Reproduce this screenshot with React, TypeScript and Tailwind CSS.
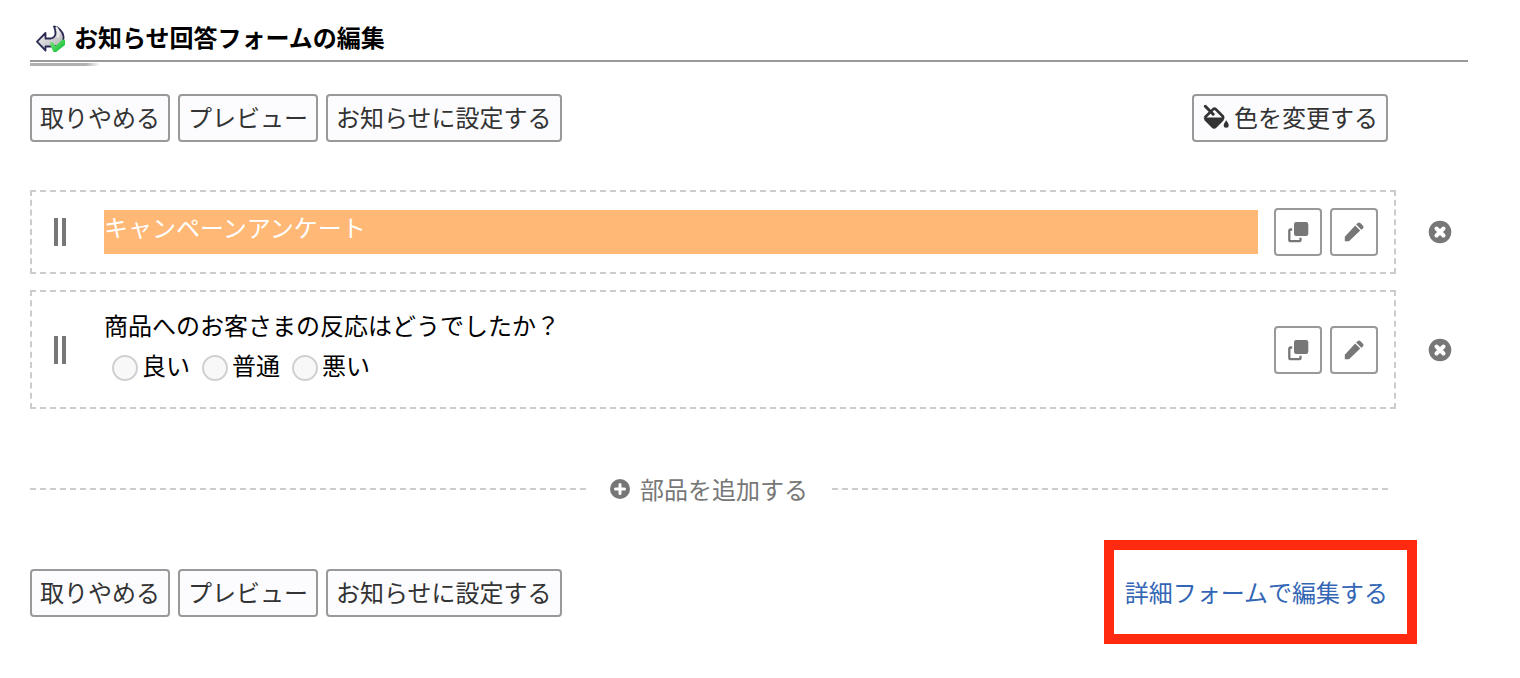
import type { ReactNode } from 'react';

const CopyIcon = () => (
  <svg className="w-6 h-6" viewBox="0 0 24 24" fill="none" aria-hidden="true">
    <rect x="8" y="2" width="14.300" height="14" rx="2.200" fill="#777" />
    <path
      d="M6.200 9.500H4.800a1.500 1.500 0 0 0-1.500 1.500v8.700a1.500 1.500 0 0 0 1.500 1.500H13a1.500 1.500 0 0 0 1.500-1.500v-1.900"
      stroke="#777"
      strokeWidth="2.300"
    />
  </svg>
);

const PencilIcon = () => (
  <svg className="w-6 h-6" viewBox="0 0 24 24" fill="#777" aria-hidden="true">
    <path d="M2.800 21.200v-4.400L13.200 5.600l5 5L7 21.200Z" />
    <path d="m14.200 4.500 1.500-1.500a2 2 0 0 1 2.600 0l2.700 2.700a2 2 0 0 1 0 2.600l-1.700 1.500Z" />
  </svg>
);

const CloseIcon = () => (
  <svg className="w-6 h-6" viewBox="0 0 24 24" aria-hidden="true">
    <circle cx="12" cy="12" r="11.300" fill="#777" />
    <path d="m8.500 8.500 7 7m0-7-7 7" stroke="#fff" strokeWidth="4" strokeLinecap="round" />
  </svg>
);

const PlusIcon = () => (
  <svg className="w-5 h-5" viewBox="0 0 20 20" aria-hidden="true">
    <circle cx="10" cy="10" r="10" fill="#777" />
    <path d="M10 5.500v9M5.500 10h9" stroke="#fff" strokeWidth="3" strokeLinecap="round" />
  </svg>
);

const BucketIcon = () => (
  <svg className="w-7 h-7" viewBox="0 0 28 28" fill="none" aria-hidden="true">
    <path
      d="M2.800 14.500 11 6.300a2 2 0 0 1 2.800 0L21 13.500v2"
      stroke="#333"
      strokeWidth="2.600"
      strokeLinejoin="round"
    />
    <path d="M1.500 14.500h21l-1 3-6.900 6.900a3.500 3.500 0 0 1-5 0L2.700 17.500Z" fill="#333" />
    <path d="m3.300 3.300 7.900 7.900" stroke="#333" strokeWidth="3" strokeLinecap="round" />
    <path d="M24.200 17.300c1 1.800 2.500 3.300 2.500 4.900a2.500 2.500 0 0 1-5 0c0-1.600 1.500-3.100 2.500-4.900Z" fill="#333" />
  </svg>
);

const ReplyIcon = () => (
  <svg className="w-[30px] h-[30px]" viewBox="0 0 30 30" aria-hidden="true">
    <defs>
      <linearGradient id="arrow" x1="0" y1="0" x2="1" y2="1">
        <stop offset="0" stopColor="#fff" />
        <stop offset="1" stopColor="#aaa" />
      </linearGradient>
      <linearGradient id="check" x1="0" y1="0" x2="1" y2="1">
        <stop offset="0" stopColor="#7be87b" />
        <stop offset="1" stopColor="#00b82c" />
      </linearGradient>
    </defs>
    <path
      d="M1 19.700 9.500 11v5.500h5.500c3-.8 4.500-3 4.500-5.500 0-2.500-.8-4.500-1.500-6.500 4.500.5 9 5 9.500 10 .3 4-1.500 8-6 9.500l-5 .5H9.500v4Z"
      fill="url(#arrow)"
      stroke="#2b2b55"
      strokeWidth="1.800"
      strokeLinejoin="round"
    />
    <path d="M20 5c3 3.500 3.500 7 1.500 10.500" stroke="#eee" strokeWidth="2" fill="none" />
    <path d="m14 20.500 2.500-.5 3 4 7-6.500 2.500.5v5L19.500 30.500l-2-.5c-1.500-3-3-5.500-3.500-9.500Z" fill="url(#check)" />
  </svg>
);

const TextButton = ({ children }: { children: ReactNode }) => (
  <button
    type="button"
    className="h-12 px-2 pb-0.5 flex items-center gap-1 border-2 border-[#999] rounded bg-[#fcfcff] text-[#333] whitespace-nowrap"
  >
    {children}
  </button>
);

const FormActions = () => (
  <div className="flex gap-2">
    <TextButton>取りやめる</TextButton>
    <TextButton>プレビュー</TextButton>
    <TextButton>お知らせに設定する</TextButton>
  </div>
);

const IconButton = ({ label, children }: { label: string; children: ReactNode }) => (
  <button
    type="button"
    aria-label={label}
    className="w-12 h-12 shrink-0 flex items-center justify-center border-2 border-[#999] rounded bg-white"
  >
    {children}
  </button>
);

const FormPart = ({ children }: { children: ReactNode }) => (
  <li className="flex items-center gap-8 pr-4">
    <div className="flex-1 flex items-center py-4 pr-4 pl-[22px] border-2 border-dashed border-[#ccc]">
      <div className="w-3 h-7 mr-[38px] shrink-0 border-x-4 border-[#777] cursor-move" />
      <div className="flex-1 mr-4">{children}</div>
      <div className="flex gap-2">
        <IconButton label="複製">
          <CopyIcon />
        </IconButton>
        <IconButton label="編集">
          <PencilIcon />
        </IconButton>
      </div>
    </div>
    <button type="button" aria-label="削除">
      <CloseIcon />
    </button>
  </li>
);

const answers = ['良い', '普通', '悪い'];

export default function App() {
  return (
    <main className="pl-[30px] pr-[52px] pt-4 pb-8 bg-white text-black text-[24px] leading-[34px] font-['Noto_Sans_CJK_JP',sans-serif]">
      <header>
        <div className="h-[46px] pb-0.5 flex items-center gap-2 pl-[6px] border-b-2 border-[#999]">
          <ReplyIcon />
          <h1 className="font-bold">お知らせ回答フォームの編集</h1>
        </div>
        <div className="w-[70px] h-[3px] mt-px bg-linear-to-r from-[#b0b0b0] from-80% to-white" />
      </header>

      <div className="flex justify-between mt-7 mr-20">
        <FormActions />
        <TextButton>
          <BucketIcon />
          色を変更する
        </TextButton>
      </div>

      <ul className="mt-12 flex flex-col gap-4">
        <FormPart>
          <div className="pb-[10px] bg-[#ffb876] text-white">キャンペーンアンケート</div>
        </FormPart>
        <FormPart>
          <fieldset className="pb-[9px]">
            <legend>商品へのお客さまの反応はどうでしたか？</legend>
            <div className="flex gap-3 mt-[6px] pl-2">
              {answers.map((answer) => (
                <label key={answer} className="flex items-center gap-1">
                  <input
                    type="radio"
                    name="reaction"
                    className="appearance-none w-[26px] h-[26px] mt-[6px] rounded-full border-2 border-[#d0d0d0] bg-[#f8f8f8] checked:bg-[#777]"
                  />
                  {answer}
                </label>
              ))}
            </div>
          </fieldset>
        </FormPart>
      </ul>

      <div className="flex items-center gap-6 mt-[63px] mr-20">
        <div className="flex-1 border-t-2 border-dashed border-[#ccc]" />
        <button type="button" className="flex items-center gap-[10px] text-[#777]">
          <PlusIcon />
          部品を追加する
        </button>
        <div className="flex-1 border-t-2 border-dashed border-[#ccc]" />
      </div>

      <div className="flex justify-between items-center mt-[63px] mr-20">
        <FormActions />
        <div className="relative pb-0.5">
          <a href="#detail" className="text-[#3366b5]">
            詳細フォームで編集する
          </a>
          <div className="absolute -left-[21px] -right-[29px] -top-[35px] -bottom-[33px] border-10 border-[#ff2a10] pointer-events-none" />
        </div>
      </div>
    </main>
  );
}
